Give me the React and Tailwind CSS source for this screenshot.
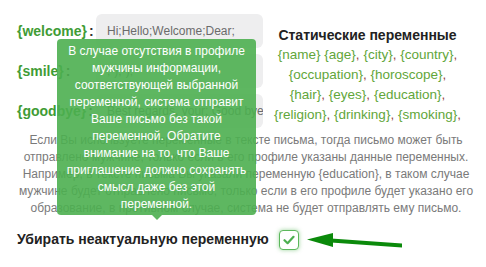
export default function App() {
  const rows = [
    { label: "{welcome}", value: "Hi;Hello;Welcome;Dear;" },
    { label: "{smile}", value: ";-);-);" },
    { label: "{goodbye}", value: "Best regards, your; Good bye;" },
  ]

  const vars = [
    ["{name}", " ", "{age}", ", ", "{city}", ", ", "{country}", ","],
    ["{occupation}", ", ", "{horoscope}", ","],
    ["{hair}", ", ", "{eyes}", ", ", "{education}", ","],
    ["{religion}", ", ", "{drinking}", ", ", "{smoking}", ","],
  ]

  const note = [
    "Если Вы используете переменные в тексте письма, тогда письмо может быть",
    "отправлено мужчине, только если в его профиле указаны данные переменных.",
    "Например, в тексте письма Вы указали переменную {education}, в таком случае",
    "мужчине будет отправлено письмо, только если в его профиле будет указано его",
    "образование, в противном случае, система не будет отправлять ему письмо.",
  ]

  const tip = [
    "В случае отсутствия в профиле",
    "мужчины информации,",
    "соответствующей выбранной",
    "переменной, система отправит",
    "Ваше письмо без такой",
    "переменной. Обратите",
    "внимание на то, что Ваше",
    "приглашение должно сохранять",
    "смысл даже без этой",
    "переменной.",
  ]

  return (
    <div className="relative w-[486px] h-[267px] overflow-hidden bg-white font-['Liberation_Sans',Arial,sans-serif]">
      <div className="flex pt-[14px]">
        {/* variable inputs */}
        <div className="flex flex-col gap-[6px] pl-[17px] w-[263px]">
          {rows.map((r) => (
            <div key={r.label} className="flex items-center h-[34px]">
              <div className="w-[79px] text-[14px] font-bold whitespace-nowrap">
                <span className="text-[#3f9c35]">{r.label}</span>
                <span className="text-[#333] ml-[2px]">:</span>
              </div>
              <div className="flex items-center w-[167px] h-[34px] px-[11px] rounded-[6px] bg-[#eeeeef] text-[12px] text-[#6b6b6b] whitespace-nowrap overflow-hidden">
                {r.value}
              </div>
            </div>
          ))}
        </div>

        {/* static variables */}
        <div className="flex-1 pt-[11px] pr-[14px] text-center">
          <div className="text-[14px] font-bold text-[#222] leading-[20px]">Статические переменные</div>
          {vars.map((line, i) => (
            <div key={i} className="text-[13.5px] leading-[20px] whitespace-nowrap">
              {line.map((p, j) =>
                p.startsWith("{") ? (
                  <span key={j} className="text-[#62a63a]">{p}</span>
                ) : (
                  <span key={j} className="text-[#9a4a4a]">{p}</span>
                )
              )}
            </div>
          ))}
        </div>
      </div>

      <div className="mt-[4px] pl-[17px] pr-[11px] text-center text-[12px] leading-[17px] text-[#7a7a7a]">
        {note.map((l) => (
          <div key={l} className="whitespace-nowrap">{l}</div>
        ))}
      </div>

      <div className="flex items-center mt-[12px] pl-[17px]">
        <span className="text-[14px] font-bold text-[#222]">Убирать неактуальную переменную</span>
        <div className="ml-[10px] flex items-center justify-center w-[20px] h-[20px] rounded-[4px] border border-[#5cb85c] bg-white shadow-[0_0_4px_rgba(92,184,92,0.6)]">
          <svg width="12" height="10" viewBox="0 0 12 10" fill="none">
            <path d="M1.5 5.2 L4.6 8.2 L10.5 1.8" stroke="#4caf50" strokeWidth="2.2" strokeLinecap="round" strokeLinejoin="round" />
          </svg>
        </div>
        <svg width="100" height="20" viewBox="0 0 100 20" className="ml-[6px]">
          <path d="M26 8.5 L97 13.5 L97 17.5 L26 12.5 Z" fill="#0b8a0b" />
          <path d="M2 9.5 L28 3 L28 17 Z" fill="#0b8a0b" />
        </svg>
      </div>

      {/* tooltip */}
      <div className="absolute left-[57px] top-[39px] w-[199px] h-[176px] rounded-[4px] bg-[#4caf50]/90 pt-[4px] text-center text-[12px] leading-[17px] text-white">
        {tip.map((l) => (
          <div key={l} className="whitespace-nowrap">{l}</div>
        ))}
        <div className="absolute left-[95px] -bottom-[5px] w-0 h-0 border-l-[5px] border-r-[5px] border-t-[5px] border-l-transparent border-r-transparent border-t-[#4caf50]/90" />
      </div>
    </div>
  )
}
